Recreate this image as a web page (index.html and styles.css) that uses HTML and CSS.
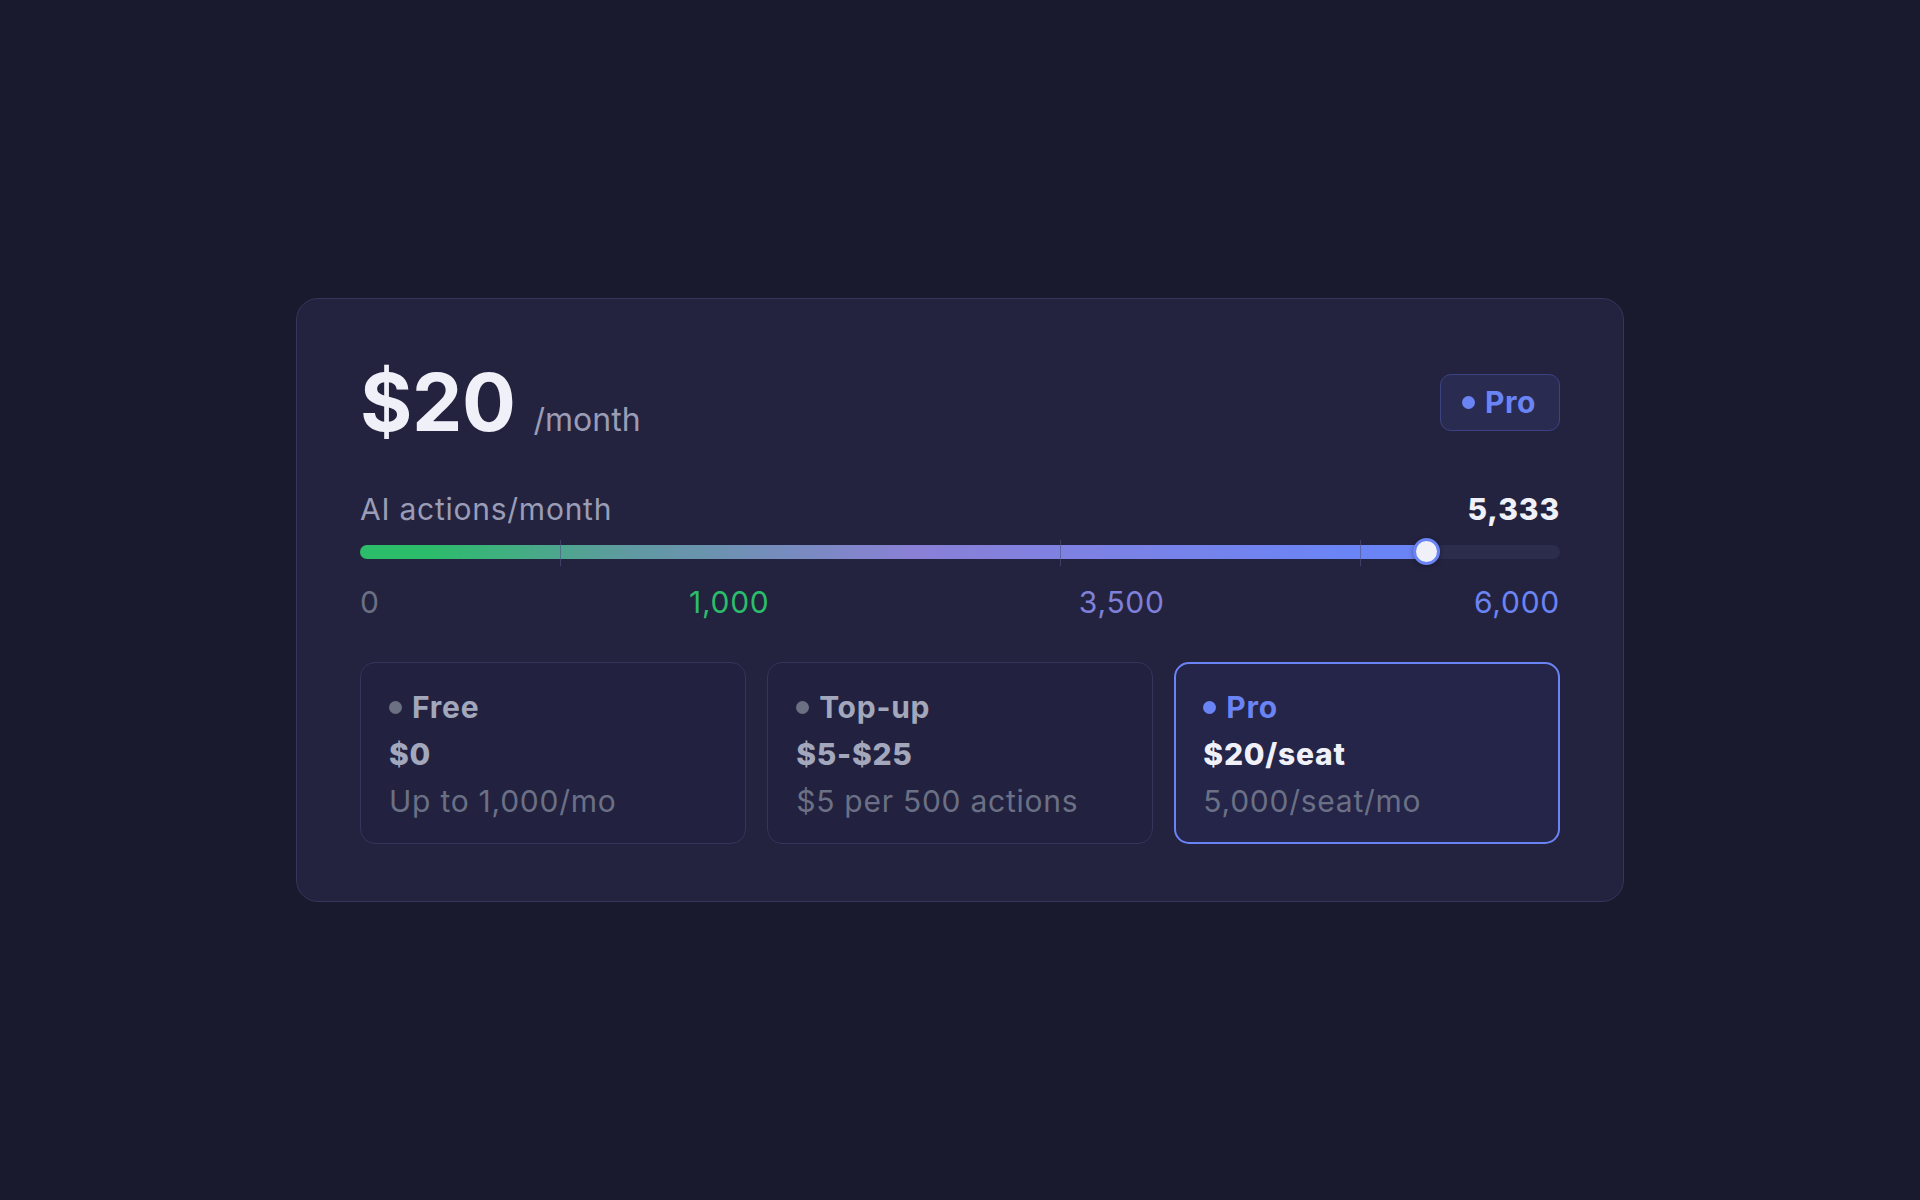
FILE: index.html
```html
<!DOCTYPE html>
<html lang="en">
<head>
<meta charset="utf-8">
<title>Pricing</title>
<link rel="stylesheet" href="styles.css">
</head>
<body>
<main class="page">
  <section class="card">
    <div class="head">
      <div class="price">
        <span class="amount">$20</span>
        <span class="per">/month</span>
      </div>
      <div class="badge"><span class="dot dot-blue"></span>Pro</div>
    </div>

    <div class="meter-head">
      <span class="meter-label">AI actions/month</span>
      <span class="meter-value">5,333</span>
    </div>

    <div class="track">
      <div class="fill" style="width: 88.88%"></div>
      <span class="tick" style="left: 16.667%"></span>
      <span class="tick" style="left: 58.333%"></span>
      <span class="tick" style="left: 83.333%"></span>
      <span class="thumb" style="left: 88.88%"></span>
    </div>

    <div class="scale">
      <span class="s-gray">0</span>
      <span class="s-green">1,000</span>
      <span class="s-purple">3,500</span>
      <span class="s-blue">6,000</span>
    </div>

    <div class="tiers">
      <div class="tier">
        <div class="tier-title"><span class="dot dot-gray"></span>Free</div>
        <div class="tier-price">$0</div>
        <div class="tier-sub">Up to 1,000/mo</div>
      </div>
      <div class="tier">
        <div class="tier-title"><span class="dot dot-gray"></span>Top-up</div>
        <div class="tier-price">$5-$25</div>
        <div class="tier-sub">$5 per 500 actions</div>
      </div>
      <div class="tier tier-active">
        <div class="tier-title"><span class="dot dot-blue"></span>Pro</div>
        <div class="tier-price">$20/seat</div>
        <div class="tier-sub">5,000/seat/mo</div>
      </div>
    </div>
  </section>
</main>
</body>
</html>
```

FILE: styles.css
```css
* { box-sizing: border-box; }

html, body {
  margin: 0;
  padding: 0;
  background: #1a1a2e;
}

body {
  font-family: "Inter", "Noto Sans", "Liberation Sans", sans-serif;
  color: #f0f1f8;
}

.page {
  min-height: 1200px;
  display: flex;
  align-items: center;
  justify-content: center;
}

.card {
  width: 1328px;
  background: #232340;
  border: 1px solid #34365a;
  border-radius: 22px;
  padding: 63px 63px 57px;
}

.head {
  display: flex;
  justify-content: space-between;
  align-items: center;
  height: 80px;
}

.price {
  display: flex;
  align-items: baseline;
}

.amount {
  font-size: 80px;
  line-height: 1;
  font-weight: 700;
  letter-spacing: -0.005em;
  color: #f0f1f8;
}

.per {
  font-size: 32px;
  margin-left: 18px;
  color: #9a9db5;
}

.badge {
  display: flex;
  align-items: center;
  gap: 10px;
  height: 57px;
  padding: 0 23px 0 21px;
  background: #2a2b50;
  border: 1px solid #3c4282;
  border-radius: 11px;
  font-size: 30px;
  font-weight: 700;
  letter-spacing: 0.02em;
  color: #6b84f5;
}

.dot {
  display: inline-block;
  width: 13px;
  height: 13px;
  border-radius: 50%;
  flex: none;
}
.dot-blue { background: #6b84f5; }
.dot-gray { background: #6b7083; }

.meter-head {
  display: flex;
  justify-content: space-between;
  margin-top: 45px;
  line-height: 45px;
  font-size: 30px;
  letter-spacing: 0.025em;
}

.meter-label { color: #9a9db5; }
.meter-value { font-weight: 800; color: #f0f1f8; letter-spacing: 0.03em; }

.track {
  position: relative;
  height: 14px;
  margin-top: 13px;
  background: #2c2d4d;
  border-radius: 7px;
}

.fill {
  height: 100%;
  border-radius: 7px 0 0 7px;
  background: linear-gradient(90deg, #2bbd6a 0%, #2bbd6a 6%, #5f9aa0 25%, #8a80d6 52%, #7a82e6 72%, #6b84f5 92%);
}

.tick {
  position: absolute;
  top: -5px;
  width: 1px;
  height: 26px;
  background: rgba(78, 82, 130, 0.6);
}

.thumb {
  position: absolute;
  top: 50%;
  width: 27px;
  height: 27px;
  margin-left: -13.5px;
  margin-top: -14px;
  border-radius: 50%;
  background: #f0f0f8;
  border: 3px solid #6b84f5;
  box-shadow: 0 1px 5px rgba(0, 0, 0, 0.35);
}

.scale {
  display: flex;
  justify-content: space-between;
  margin-top: 21px;
  line-height: 45px;
  font-size: 30px;
  letter-spacing: 0.025em;
}

.s-gray { color: #6b7083; }
.s-green { color: #2bbd6a; }
.s-purple { color: #7f80d9; }
.s-blue { color: #6b84f5; }

.tiers {
  display: grid;
  grid-template-columns: repeat(3, 1fr);
  gap: 21.5px;
  margin-top: 37px;
}

.tier {
  display: flex;
  flex-direction: column;
  gap: 2px;
  padding: 22px 28px 19px;
  border: 1px solid #33355a;
  border-radius: 15px;
  background: #222240;
  font-size: 30px;
  line-height: 45px;
  letter-spacing: 0.025em;
}

.tier-active {
  border: 2px solid #6b84f5;
  padding: 21px 27px 18px;
  background: #242548;
}

.tier-title {
  display: flex;
  align-items: center;
  gap: 10px;
  font-weight: 700;
  color: #a3a7bc;
}

.tier-price {
  font-weight: 800;
  color: #a3a7bc;
}

.tier-sub {
  color: #6b7085;
}

.tier-active .tier-title { color: #6b84f5; }
.tier-active .tier-price { color: #f0f1f8; }
```
